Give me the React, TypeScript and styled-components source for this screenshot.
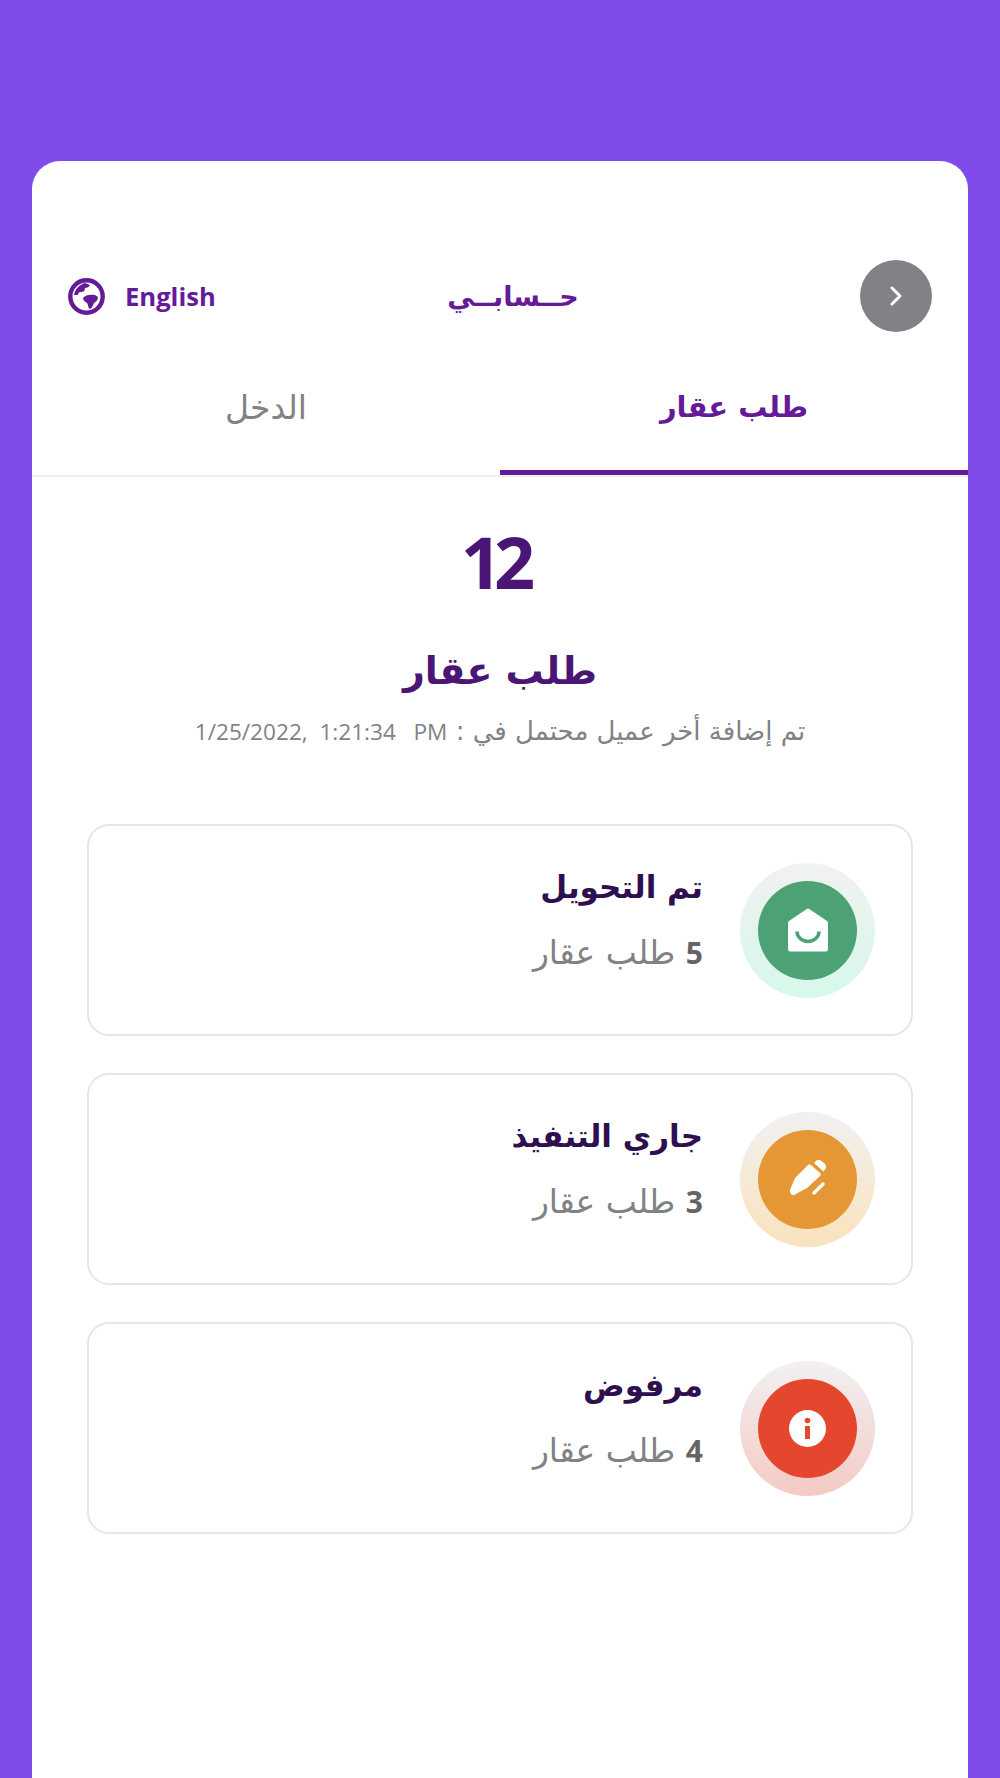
import React from "react";
import styled, { createGlobalStyle } from "styled-components";

const Global = createGlobalStyle`
  html, body { margin: 0; padding: 0; background: #7f4beb; }
  body { font-family: "Noto Sans", "DejaVu Sans", sans-serif; }
`;

const Page = styled.div`
  height: 1778px;
  box-sizing: border-box;
  padding: 161px 32px 0;
  overflow: hidden;
`;

const Sheet = styled.main`
  height: 1617px;
  background: #fff;
  border-radius: 28px 28px 0 0;
  direction: rtl;
`;

const Header = styled.header`
  display: grid;
  grid-template-columns: 1fr auto 1fr;
  align-items: center;
  padding: 99px 36px 0 36px;
`;

const BackButton = styled.button`
  width: 72px;
  height: 72px;
  border: 0;
  padding: 0;
  border-radius: 50%;
  background: #808285;
  display: flex;
  align-items: center;
  justify-content: center;
`;

const Title = styled.h1`
  margin: 0;
  padding-left: 26px;
  font: 700 27px "DejaVu Sans", sans-serif;
  color: #651a9a;
`;

const Language = styled.div`
  justify-self: end;
  display: flex;
  direction: ltr;
  align-items: center;
  gap: 20px;
  font: 700 25.6px "Open Sans", sans-serif;
  color: #651a9a;
`;

const Tabs = styled.nav`
  display: grid;
  grid-template-columns: 1fr 1fr;
  border-bottom: 2px solid #eeeeee;
`;

const Tab = styled.div<{ $active?: boolean }>`
  height: 143px;
  box-sizing: border-box;
  padding-top: 12px;
  display: flex;
  align-items: center;
  justify-content: center;
  font: ${(p) => (p.$active ? "700 29px" : "400 33px")} "DejaVu Sans", sans-serif;
  color: ${(p) => (p.$active ? "#651a9a" : "#808285")};
  border-bottom: 5px solid ${(p) => (p.$active ? "#651a9a" : "transparent")};
`;

const Summary = styled.section`
  display: flex;
  flex-direction: column;
  align-items: center;
  padding-top: 44px;
`;

const Total = styled.div`
  font: 700 72px/80px "Open Sans", sans-serif;
  letter-spacing: -8px;
  margin-right: 12px;
  color: #4b1575;
`;

const SummaryLabel = styled.h2`
  margin: 42px 0 0;
  font: 700 38px/56px "DejaVu Sans", sans-serif;
  color: #4b1575;
`;

const Updated = styled.p`
  margin: 15px 0 0;
  font: 400 26px/34px "DejaVu Sans", sans-serif;
  color: #808285;
  white-space: pre;
`;

const Stamp = styled.bdi`
  font: 400 22.6px/34px "Open Sans", sans-serif;
`;

const List = styled.div`
  display: flex;
  flex-direction: column;
  gap: 37px;
  padding: 75px 55px 0;
`;

const Card = styled.article`
  height: 212px;
  box-sizing: border-box;
  border: 2px solid #e6e6e6;
  border-radius: 22px;
  display: flex;
  align-items: center;
  gap: 37px;
  padding: 0 36px;
`;

const Ring = styled.div<{ $tint: string }>`
  width: 135px;
  height: 135px;
  border-radius: 50%;
  background: linear-gradient(180deg, #f1f1f1 0%, ${(p) => p.$tint} 100%);
  display: flex;
  align-items: center;
  justify-content: center;
  flex: none;
`;

const Disc = styled.div<{ $color: string }>`
  width: 99px;
  height: 99px;
  border-radius: 50%;
  background: ${(p) => p.$color};
  display: flex;
  align-items: center;
  justify-content: center;
`;

const CardText = styled.div`
  display: flex;
  flex-direction: column;
  gap: 22px;
  padding-bottom: 20px;
`;

const CardTitle = styled.h3`
  margin: 0;
  font: 700 31px/44px "DejaVu Sans", sans-serif;
  color: #2e0f4f;
`;

const CardCount = styled.p`
  margin: 0;
  font: 400 33px/44px "DejaVu Sans", sans-serif;
  color: #808285;
`;

const Count = styled.b`
  color: #636466;
  font: 700 30px/44px "Open Sans", sans-serif;
`;

const Chevron = () => (
  <svg width="16" height="24" viewBox="0 0 16 24" fill="none" stroke="#fff" strokeWidth="3" strokeLinecap="round" strokeLinejoin="round">
    <path d="M4 4l8 8-8 8" />
  </svg>
);

const Globe = () => (
  <svg width="37" height="37" viewBox="0 0 37 37" fill="none">
    <circle cx="18.5" cy="18.5" r="16.2" stroke="#651a9a" strokeWidth="4.4" />
    <path d="M6 17c1-6 5-10 11-12l5 2c-1 2-3 3-5 3 0 3-2 4-4 4-2 0-3 1-3 3l-4 0z" fill="#651a9a" />
    <path d="M15 20c2-3 7-4 12-3l3 2c0 3-2 5-4 6-1 2-2 5-4 6-2-1-2-5-3-6-2-1-4-3-4-5z" fill="#651a9a" />
  </svg>
);

const House = () => (
  <svg width="42" height="44" viewBox="0 0 42 44">
    <path d="M19.800 1a2 2 0 0 1 2.400 0L40 13a2 2 0 0 1 1 1.700V41.500a2 2 0 0 1-2 2H3a2 2 0 0 1-2-2V14.700a2 2 0 0 1 1-1.700z" fill="#fff" />
    <path d="M10 23.500a11 10 0 0 0 22 0" fill="none" stroke="#4da275" strokeWidth="3.500" />
  </svg>
);

const Pen = () => (
  <svg width="38" height="38" viewBox="0 0 38 38">
    <path d="M1 30l5-12L19 5c1-1 2-1 3 0l9 8c1 1 1 2 0 3L18 28 5 35c-2 1-4.500-2-4-5z" fill="#fff" />
    <path d="M25 3l1.500-1.500c1.500-1.500 4-2 6-.5l3 2.500c2 2 2 4.500.5 6l-1.500 2z" fill="#fff" />
    <path d="M25 33l9-9" stroke="#fff" strokeWidth="3.500" strokeLinecap="round" />
  </svg>
);

const Info = () => (
  <svg width="37" height="37" viewBox="0 0 37 37">
    <circle cx="18.500" cy="18.500" r="18.500" fill="#fff" />
    <rect x="16" y="16" width="5" height="13" fill="#e5462e" />
    <circle cx="18.500" cy="10.500" r="2.800" fill="#e5462e" />
  </svg>
);

const items = [
  { title: "تم التحويل", count: 5, color: "#4da275", tint: "#d6f8ea", icon: <House /> },
  { title: "جاري التنفيذ", count: 3, color: "#e59735", tint: "#fae2bc", icon: <Pen /> },
  { title: "مرفوض", count: 4, color: "#e5462e", tint: "#f4cac4", icon: <Info /> },
];

export default function App() {
  return (
    <>
      <Global />
      <Page>
        <Sheet>
          <Header>
            <BackButton aria-label="back"><Chevron /></BackButton>
            <Title>حــسابــي</Title>
            <Language><Globe />English</Language>
          </Header>
          <Tabs>
            <Tab $active>طلب عقار</Tab>
            <Tab>الدخل</Tab>
          </Tabs>
          <Summary>
            <Total>12</Total>
            <SummaryLabel>طلب عقار</SummaryLabel>
            <Updated>{"تم إضافة أخر عميل محتمل في : "}<Stamp dir="ltr">{"1/25/2022,  1:21:34   PM"}</Stamp></Updated>
          </Summary>
          <List>
            {items.map((it) => (
              <Card key={it.title}>
                <Ring $tint={it.tint}>
                  <Disc $color={it.color}>{it.icon}</Disc>
                </Ring>
                <CardText>
                  <CardTitle>{it.title}</CardTitle>
                  <CardCount><Count>{it.count}</Count> طلب عقار</CardCount>
                </CardText>
              </Card>
            ))}
          </List>
        </Sheet>
      </Page>
    </>
  );
}
